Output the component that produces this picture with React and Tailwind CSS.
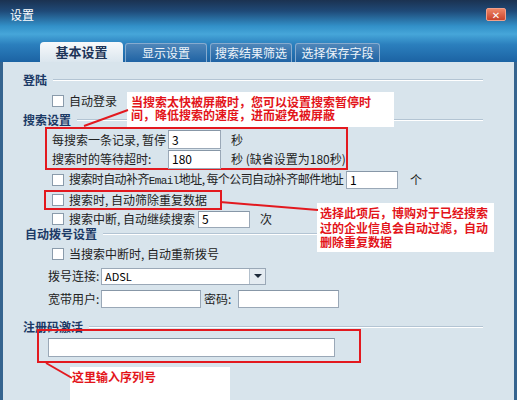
import React from 'react';

const FONT = { fontFamily: '"Noto Sans CJK SC", "DejaVu Sans", sans-serif' };

function Heading({ text, className = '' }) {
  return (
    <div className={`flex items-center pl-[20px] pr-[31px] ${className}`}>
      <span className="text-[12px] font-bold text-[#1c3a66] leading-none">{text}</span>
      <div className="flex-1 ml-[6px] h-[2px] border-t border-[#b3c4d3] border-b border-b-white" />
    </div>
  );
}

function Check() {
  return <span className="w-[12px] h-[12px] shrink-0 bg-white border border-[#8a9bab] mr-[5px]" />;
}

function Field({ value = '', className = '' }) {
  return (
    <div
      className={`shrink-0 bg-white border border-[#9aa8b7] border-t-[#8797a7] flex items-center pl-[3px] text-[12px] text-black ${className}`}
    >
      {value}
    </div>
  );
}

export default function App() {
  return (
    <div
      className="relative w-[517px] h-[400px] overflow-hidden text-[12px] leading-[14px] whitespace-nowrap text-[#222]"
      style={FONT}
    >
      {/* title bar + tab strip */}
      <div className="h-[62px] flex flex-col bg-[linear-gradient(to_bottom,#1b3251_0%,#1f4a78_18%,#3290c8_42%,#46a6d9_55%,#2b7fbd_72%,#1c63a3_100%)]">
        <div className="h-[42px] flex items-start justify-between pl-[10px] pr-[11px] pt-[7px]">
          <span className="text-white text-[12px] leading-[16px]">设置</span>
          <div className="mt-[1px] w-[20px] h-[13px] rounded-[2px] border border-[#f1a08a] bg-[linear-gradient(to_bottom,#ee8566,#c9432b)] flex items-center justify-center text-white text-[10px] font-bold leading-none">
            ✕
          </div>
        </div>
        <div className="h-[20px] flex items-end pl-[40px]">
          <div className="w-[83px] h-[20px] rounded-t-[4px] bg-[linear-gradient(to_bottom,#f7f9fb,#dbe6ee)] flex items-center justify-center text-[13px] font-bold text-[#1d3458]">
            基本设置
          </div>
          <div className="ml-[2px] w-[82px] h-[19px] rounded-t-[3px] border border-b-0 border-[#86abcf] bg-[linear-gradient(to_bottom,#4f86b9,#1f63a4)] flex items-center justify-center text-[12px] text-[#eef4fa]">
            显示设置
          </div>
          <div className="ml-[3px] w-[82px] h-[19px] rounded-t-[3px] border border-b-0 border-[#86abcf] bg-[linear-gradient(to_bottom,#4f86b9,#1f63a4)] flex items-center justify-center text-[12px] text-[#eef4fa]">
            搜索结果筛选
          </div>
          <div className="ml-[3px] w-[85px] h-[19px] rounded-t-[3px] border border-b-0 border-[#86abcf] bg-[linear-gradient(to_bottom,#4f86b9,#1f63a4)] flex items-center justify-center text-[12px] text-[#eef4fa]">
            选择保存字段
          </div>
        </div>
      </div>

      {/* content */}
      <div className="h-[338px] bg-[#d8e4ec] border-x-[3px] border-[#35648f] flex flex-col pt-[9px]">
        <Heading text="登陆" className="h-[18px]" />
        <div className="h-[24px] flex items-center pl-[49px]">
          <Check />
          <span>自动登录</span>
        </div>
        <Heading text="搜索设置" className="h-[14px]" />

        <div className="ml-[42px] w-[303px] h-[43px] border-2 border-[#e3191f] flex flex-col pt-[1px] pl-[5px]">
          <div className="h-[19px] flex items-center">
            <span className="w-[116px]">每搜索一条记录, 暂停</span>
            <Field value="3" className="w-[53px] h-[19px]" />
            <span className="ml-[10px]">秒</span>
          </div>
          <div className="mt-[1px] h-[18px] flex items-center">
            <span className="w-[116px]">搜索时的等待超时:</span>
            <Field value="180" className="w-[53px] h-[19px]" />
            <span className="ml-[10px]">秒 (缺省设置为180秒)</span>
          </div>
        </div>

        <div className="h-[20px] flex items-center pl-[49px]">
          <Check />
          <span className="w-[277px] tracking-[-0.6px]">
            搜索时自动补齐<span className="font-['Liberation_Mono'] text-[11px]">Email</span>地址, 每个公司自动补齐邮件地址
          </span>
          <Field value="1" className="w-[52px] h-[18px]" />
          <span className="ml-[12px]">个</span>
        </div>

        <div className="ml-[41px] w-[178px] h-[20px] border-2 border-[#e3191f] flex items-center pl-[6px]">
          <Check />
          <span>搜索时, 自动筛除重复数据</span>
        </div>

        <div className="h-[18px] flex items-center pl-[49px]">
          <Check />
          <span className="w-[129px]">搜索中断, 自动继续搜索</span>
          <Field value="5" className="w-[52px] h-[17px]" />
          <span className="ml-[10px]">次</span>
        </div>

        <Heading text="自动拨号设置" className="h-[12px] pl-[22px]" />

        <div className="mt-[4px] h-[20px] flex items-center pl-[49px]">
          <Check />
          <span>当搜索中断时, 自动重新拨号</span>
        </div>

        <div className="mt-[3px] h-[18px] flex items-center pl-[45px]">
          <span className="w-[53px]">拨号连接:</span>
          <div className="w-[165px] h-[17px] bg-white border border-[#9aa8b7] flex items-center">
            <span className="flex-1 pl-[3px] text-[11px] text-black">ADSL</span>
            <div className="w-[16px] h-[15px] bg-[#e4ebf1] border-l border-[#b3c0cc] flex items-center justify-center">
              <span className="w-0 h-0 border-x-[4px] border-x-transparent border-t-[4px] border-t-[#1d2a3a]" />
            </div>
          </div>
        </div>

        <div className="mt-[5px] h-[18px] flex items-center pl-[45px]">
          <span className="w-[53px]">宽带用户:</span>
          <Field className="w-[100px] h-[18px]" />
          <span className="ml-[3px] w-[34px]">密码:</span>
          <Field className="w-[101px] h-[18px]" />
        </div>

        <Heading text="注册码激活" className="mt-[12px] h-[14px]" />

        <div className="-mt-[5px] ml-[34px] w-[324px] h-[34px] border-2 border-[#e3191f] pl-[9px] pt-[7px]">
          <Field className="w-[287px] h-[19px]" />
        </div>
      </div>

      {/* annotations */}
      <div className="absolute left-[127px] top-[92px] w-[267px] h-[35px] bg-white pl-[4px] pt-[3px] text-[12px] leading-[13px] font-bold text-[#e3141a]">
        <div>当搜索太快被屏蔽时，您可以设置搜索暂停时</div>
        <div>间，降低搜索的速度，进而避免被屏蔽</div>
      </div>
      <div className="absolute left-[317px] top-[203px] w-[177px] h-[49px] bg-white pl-[3px] pt-[3px] text-[12px] leading-[14.5px] font-bold text-[#e3141a]">
        <div>选择此项后，博购对于已经搜索</div>
        <div>过的企业信息会自动过滤，自动</div>
        <div>删除重复数据</div>
      </div>
      <div className="absolute left-[70px] top-[367px] w-[160px] h-[33px] bg-white pl-[2px] pt-[3px] text-[12px] leading-[14px] font-bold text-[#e3141a]">
        这里输入序列号
      </div>

      {/* pointer lines */}
      <svg className="absolute left-0 top-0 pointer-events-none" width="517" height="400">
        <line x1="84" y1="126" x2="128" y2="110" stroke="#e3191f" strokeWidth="2" />
        <line x1="220" y1="202" x2="318" y2="210" stroke="#e3191f" strokeWidth="2" />
        <line x1="46" y1="363" x2="72" y2="378" stroke="#e3191f" strokeWidth="2" />
      </svg>
    </div>
  );
}
